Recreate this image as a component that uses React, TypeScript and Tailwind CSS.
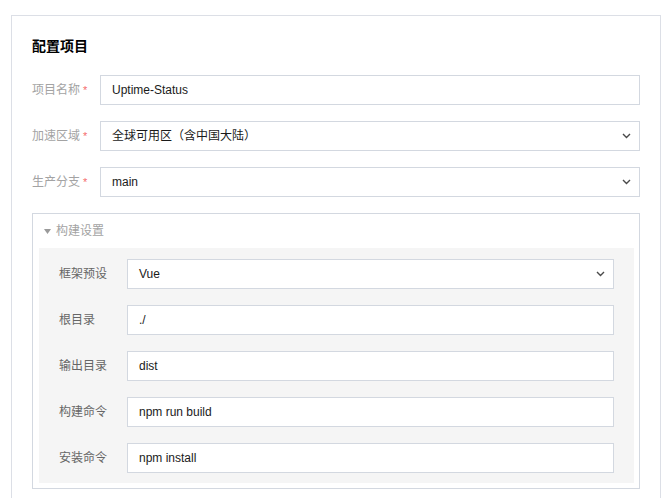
import React from "react";

const Chevron = () => (
  <svg width="9" height="6" viewBox="0 0 9 6" className="shrink-0">
    <polyline points="1,1 4.5,4.5 8,1" fill="none" stroke="#4a4a4a" strokeWidth="1.4" />
  </svg>
);

function Field({ value, select }: { value: string; select?: boolean }) {
  return (
    <div className="flex-1 h-[30px] border border-[#d3d8e0] bg-white flex items-center pl-[11px] pr-[8px]">
      <span className="flex-1 text-[12px] text-[#1a1a1a] leading-none">{value}</span>
      {select && <Chevron />}
    </div>
  );
}

function Row({ label, value, select, required, inner }: { label: string; value: string; select?: boolean; required?: boolean; inner?: boolean }) {
  return (
    <div className="flex items-center">
      <div className={`w-[68px] shrink-0 text-[12px] flex items-center ${inner ? "text-[#666]" : "text-[#a3a3a3]"}`}>
        <span>{label}</span>
        {required && <span className="ml-[3px] text-[#f56c6c] text-[11px]">*</span>}
      </div>
      <Field value={value} select={select} />
    </div>
  );
}

export default function App() {
  return (
    <div
      className="bg-white min-h-screen pl-[11px] pt-[15px]"
      style={{ fontFamily: '"Liberation Sans", "Noto Sans CJK SC", sans-serif' }}
    >
      <div className="w-[650px] border border-[#dcdfe6] px-[20px] pt-[20px] pb-[24px]">
        <h2 className="text-[14px] font-bold leading-[20px] text-black">配置项目</h2>
        <div className="mt-[19px] flex flex-col gap-[16px]">
          <Row label="项目名称" value="Uptime-Status" required />
          <Row label="加速区域" value="全球可用区（含中国大陆）" required select />
          <Row label="生产分支" value="main" required select />
          <div className="border border-[#d3d8e0]">
            <div className="h-[34px] flex items-center pl-[11px] text-[12px] text-[#a3a3a3]">
              <svg width="7" height="5" viewBox="0 0 7 5" className="mr-[5px]">
                <polygon points="0,0 7,0 3.5,5" fill="#9a9a9a" />
              </svg>
              <span>构建设置</span>
            </div>
            <div className="ml-[6px] mr-[5px] mb-[5px] bg-[#f5f5f5] pt-[11px] pb-[10px] px-[20px] flex flex-col gap-[16px]">
              <Row label="框架预设" value="Vue" select inner />
              <Row label="根目录" value="./" inner />
              <Row label="输出目录" value="dist" inner />
              <Row label="构建命令" value="npm run build" inner />
              <Row label="安装命令" value="npm install" inner />
            </div>
          </div>
        </div>
      </div>
    </div>
  );
}
